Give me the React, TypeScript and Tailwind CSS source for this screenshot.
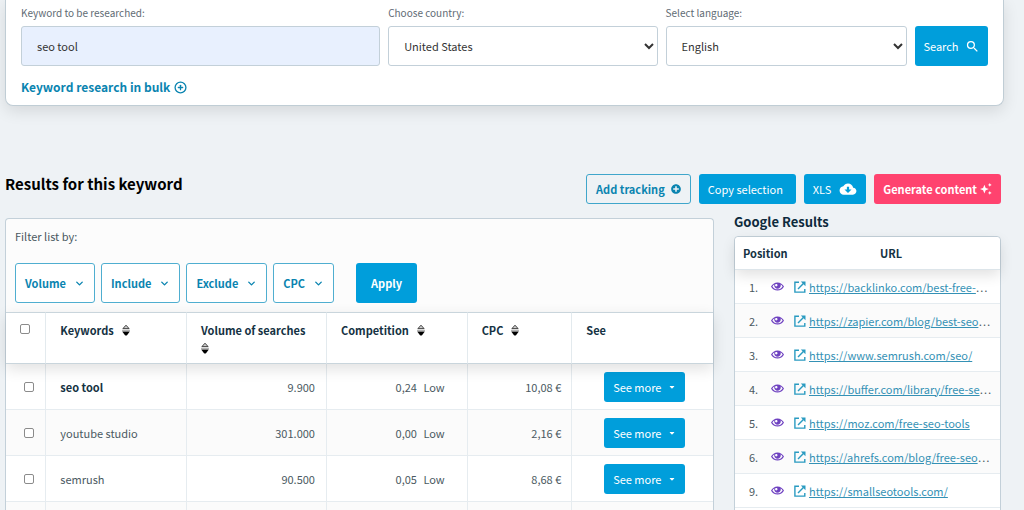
import { FaCaretDown, FaPlusCircle } from 'react-icons/fa';
import { ImEye } from 'react-icons/im';
import { IoMdCloudDownload } from 'react-icons/io';
import { MdSearch } from 'react-icons/md';
import { FiChevronDown } from 'react-icons/fi';
import { CirclePlus } from 'lucide-react';

const filters = ['Volume', 'Include', 'Exclude', 'CPC'];

const keywords = [
  { name: 'seo tool', volume: '9.900', score: '0,24', cpc: '10,08 €', main: true },
  { name: 'youtube studio', volume: '301.000', score: '0,00', cpc: '2,16 €' },
  { name: 'semrush', volume: '90.500', score: '0,05', cpc: '8,68 €' },
];

const results = [
  { position: '1.', url: 'https://backlinko.com/best-free-', cut: true },
  { position: '2.', url: 'https://zapier.com/blog/best-seo', cut: true },
  { position: '3.', url: 'https://www.semrush.com/seo/' },
  { position: '4.', url: 'https://buffer.com/library/free-se', cut: true },
  { position: '5.', url: 'https://moz.com/free-seo-tools' },
  { position: '6.', url: 'https://ahrefs.com/blog/free-seo', cut: true },
  { position: '9.', url: 'https://smallseotools.com/' },
];

const SortIcon = () => (
  <svg viewBox="0 0 8 12" className="h-3 w-2 shrink-0" aria-hidden="true">
    <path d="M0.9 4.6 L4 1.2 L7.1 4.6 Z" fill="#ccc" stroke="#333" strokeWidth="0.9" strokeLinejoin="round" />
    <path d="M0 6.3 H8" stroke="#888" strokeWidth="0.8" />
    <path d="M0.2 7.4 H7.8 L5 11.2 Q4 12 3 11.2 Z" fill="#000" />
  </svg>
);

const SparkleIcon = () => (
  <svg viewBox="0 0 12 12" className="size-3" fill="currentColor" aria-hidden="true">
    <path d="M4.4 1.8 L5.7 4.9 L8.8 6.1 L5.7 7.3 L4.4 10.4 L3.1 7.3 L0 6.1 L3.1 4.9 Z" />
    <path d="M9.8 0 L10.4 1.3 L11.7 1.9 L10.4 2.5 L9.8 3.8 L9.2 2.5 L7.9 1.9 L9.2 1.3 Z" />
    <path d="M9.8 8 L10.4 9.3 L11.7 9.9 L10.4 10.5 L9.8 11.8 L9.2 10.5 L7.9 9.9 L9.2 9.3 Z" />
  </svg>
);

const ExternalIcon = () => (
  <svg viewBox="0 0 12 12" className="size-3 shrink-0 text-[#2a9bc1]" fill="none" stroke="currentColor" strokeWidth="1.4" aria-hidden="true">
    <path d="M5 1.2 H0.9 V11.1 H10.8 V8" />
    <path d="M4 8 L9.4 2.6" />
    <path d="M6.8 0.5 H11.5 V5.2 Z" fill="currentColor" stroke="none" />
  </svg>
);

const SearchForm = () => (
  <form
    className="mr-5 ml-[5px] h-[106px] rounded-b-lg border border-t-0 border-[#c0cdd5] bg-white px-[15px] pt-1 shadow-[0_5px_16px_rgba(0,0,0,0.11)]"
    onSubmit={(e) => e.preventDefault()}
  >
    <div className="flex items-end gap-2">
      <div className="flex flex-[360] flex-col gap-1">
        <label htmlFor="keyword" className="text-[10px] text-[#5f6b74]">Keyword to be researched:</label>
        <input
          id="keyword"
          defaultValue="seo tool"
          className="h-10 w-full rounded-[3px] border border-[#c3d0d9] bg-[#e8f0fe] px-[15px] text-[#333]"
        />
      </div>
      <div className="flex flex-[270] flex-col gap-1">
        <label htmlFor="country" className="text-[10px] text-[#5f6b74]">Choose country:</label>
        <select id="country" className="h-10 w-full rounded-[3px] border border-[#c3d0d9] bg-white pl-[11px] text-[#333]">
          <option>United States</option>
        </select>
      </div>
      <div className="flex flex-[242] flex-col gap-1">
        <label htmlFor="language" className="text-[10px] text-[#5f6b74]">Select language:</label>
        <select id="language" className="h-10 w-full rounded-[3px] border border-[#c3d0d9] bg-white pl-[11px] text-[#333]">
          <option>English</option>
        </select>
      </div>
      <button className="flex h-10 w-[73px] items-center justify-center gap-[6px] rounded-[3px] bg-[#009edb] text-white">
        Search
        <MdSearch className="size-[15px]" />
      </button>
    </div>
    <a href="#bulk" className="mt-[11px] inline-flex items-center gap-1 text-[12px] leading-5 font-bold text-[#0a84b0]">
      Keyword research in bulk
      <CirclePlus className="size-[13px]" strokeWidth={2.4} />
    </a>
  </form>
);

const Actions = () => (
  <div className="flex items-center gap-2 whitespace-nowrap text-white">
    <button className="flex h-[30px] items-center gap-[6px] rounded-[3px] border border-[#3fa6cb] px-[9px] font-bold text-[#0a84b0]">
      Add tracking
      <FaPlusCircle className="size-[10px]" />
    </button>
    <button className="h-[30px] w-[97px] rounded-[3px] bg-[#009edb] px-[9px] text-left">Copy selection</button>
    <button className="flex h-[30px] items-center gap-2 rounded-[3px] bg-[#009edb] px-[9px]">
      XLS
      <IoMdCloudDownload className="size-[18px]" />
    </button>
    <button className="flex h-[30px] items-center gap-[3px] rounded-[3px] bg-[#ff436f] px-[9px] font-bold">
      Generate content
      <SparkleIcon />
    </button>
  </div>
);

const KeywordTable = () => (
  <table className="w-full table-fixed border-separate border-spacing-0 text-[#4a5961]">
    <colgroup>
      <col className="w-[5.7%]" />
      <col className="w-[19.9%]" />
      <col className="w-[19.8%]" />
      <col className="w-[19.9%]" />
      <col className="w-[14.8%]" />
      <col className="w-[19.9%]" />
    </colgroup>
    <thead className="relative z-10 shadow-[0_5px_14px_rgba(0,0,0,0.12)]">
      <tr className="h-[52px] bg-white text-left align-top text-[#153243] [&>th]:border-y [&>th]:border-r [&>th]:border-y-[#c9d5dc] [&>th]:border-r-[#e3eaee] [&>th]:pt-2 [&>th]:pl-[14px] [&>th:last-child]:border-r-0">
        <th>
          <input type="checkbox" aria-label="Select all keywords" className="mt-[3px] block size-[10px] appearance-none rounded-[2px] border border-[#8b8b8b] bg-white" />
        </th>
        <th><span className="flex items-center gap-2">Keywords <SortIcon /></span></th>
        <th><span className="flex flex-wrap items-center gap-x-2 gap-y-[3px] pr-3">Volume of searches <SortIcon /></span></th>
        <th><span className="flex items-center gap-2">Competition <SortIcon /></span></th>
        <th><span className="flex items-center gap-2">CPC <SortIcon /></span></th>
        <th>See</th>
      </tr>
    </thead>
    <tbody>
      {keywords.map((k) => (
        <tr key={k.name} className="h-[46px] odd:bg-white even:bg-[#fbfbfb] [&>td]:border-r [&>td]:border-b [&>td]:border-[#e6ecf0] [&>td:last-child]:border-r-0">
          <td className="pl-[18px]">
            <input type="checkbox" aria-label={k.name} className="block size-[10px] appearance-none rounded-[2px] border border-[#8b8b8b] bg-white" />
          </td>
          <td className={k.main ? 'pl-[14px] font-bold text-[#153243]' : 'pl-[14px]'}>{k.name}</td>
          <td className="pr-[11px] text-right">{k.volume}</td>
          <td className="pr-[22px] text-right">
            {k.score} <span className="ml-1">Low</span>
          </td>
          <td className="pr-[10px] text-right">{k.cpc}</td>
          <td className="pl-1">
            <button className="mx-auto flex h-[30px] w-[81px] items-center justify-between rounded-[3px] bg-[#009edb] px-[9px] text-white">
              See more
              <FaCaretDown className="size-2" />
            </button>
          </td>
        </tr>
      ))}
      <tr className="h-[46px] bg-[#fbfbfb] [&>td]:border-r [&>td]:border-[#e6ecf0] [&>td:last-child]:border-r-0">
        <td /><td /><td /><td /><td /><td />
      </tr>
    </tbody>
  </table>
);

const GoogleResults = () => (
  <aside className="w-[267px] shrink-0 pt-2">
    <h2 className="text-[13px] leading-5 font-bold text-[#0d2a3c]">Google Results</h2>
    <div className="mt-1 rounded-t-[4px] border border-[#c3d0d9] bg-white pb-8">
      <table className="w-full table-fixed border-separate border-spacing-0 text-[#4a5961]">
        <colgroup>
          <col className="w-[59px]" />
          <col />
        </colgroup>
        <thead className="relative z-10 rounded-t-[4px] shadow-[0_5px_14px_rgba(0,0,0,0.12)]">
          <tr className="h-[33px] text-left text-[#153243] [&>th]:border-b [&>th]:border-[#dde5ea] [&>th]:bg-white">
            <th className="rounded-tl-[4px] pl-2">Position</th>
            <th className="rounded-tr-[4px] pr-3 text-center">URL</th>
          </tr>
        </thead>
        <tbody>
          {results.map((r) => (
            <tr key={r.position} className="h-[34px] whitespace-nowrap odd:bg-white even:bg-[#fbfbfb] [&>td]:border-b [&>td]:border-[#e6ecf0]">
              <td className="pl-[14px]">
                <div className="flex items-center gap-[13px]">
                  <span className="w-[9px]">{r.position}</span>
                  <ImEye className="size-[13px] shrink-0 text-[#6f42c1]" />
                </div>
              </td>
              <td>
                <div className="flex items-center gap-[3px]">
                  <ExternalIcon />
                  <span><a href={r.url} className="text-[#3491b5] underline">{r.url}</a>{r.cut && '…'}</span>
                </div>
              </td>
            </tr>
          ))}
        </tbody>
      </table>
    </div>
  </aside>
);

export default function App() {
  return (
    <main className="h-screen overflow-hidden bg-[#eef2f5] font-['Noto_Sans_CJK_SC',sans-serif] text-[11px] leading-[18px]">
      <SearchForm />
      <div className="mt-[68px] mr-[23px] ml-[5px] flex items-start justify-between">
        <h1 className="text-[15px] leading-5 font-bold text-black">Results for this keyword</h1>
        <Actions />
      </div>
      <div className="mr-[23px] ml-[5px] flex items-start gap-5">
        <section className="mt-[14px] min-w-0 flex-1 rounded-t-[4px] border border-b-0 border-[#c3d0d9] bg-[#fcfcfc]">
          <p className="px-[9px] pt-2 text-[#4a5961]">Filter list by:</p>
          <div className="flex gap-[6px] px-[9px] pt-[18px] pb-[9px] font-bold">
            {filters.map((f) => (
              <button key={f} className="flex h-10 items-center gap-2 rounded-[3px] border border-[#4faed0] bg-white px-[9px] text-[#0a84b0]">
                {f}
                <FiChevronDown className="size-[11px]" strokeWidth={3} />
              </button>
            ))}
            <button className="ml-4 h-10 rounded-[3px] bg-[#009edb] px-[15px] text-white">Apply</button>
          </div>
          <KeywordTable />
        </section>
        <GoogleResults />
      </div>
    </main>
  );
}
